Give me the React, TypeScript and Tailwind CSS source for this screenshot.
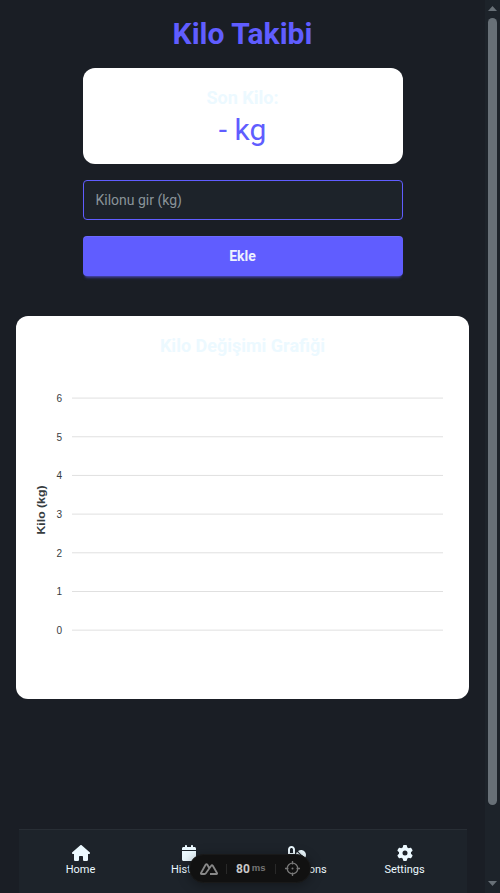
import { FaCalendar, FaGear, FaHouse, FaPills } from "react-icons/fa6";

const ticks = [6, 5, 4, 3, 2, 1, 0];

function Chart() {
  return (
    <svg width="421" height="323" viewBox="32 360 421 323" className="block">
      {ticks.map((t, i) => {
        const y = 398.07 + i * 38.68;
        return (
          <g key={t}>
            <line x1="72" x2="443" y1={y} y2={y} stroke="#e0e0e0" strokeWidth="1" />
            <text x="62" y={y + 4} textAnchor="end" textLength="5.6" lengthAdjust="spacingAndGlyphs" fill="#373d3f" className="font-['Liberation_Sans',sans-serif] text-[11px]">
              {t}
            </text>
          </g>
        );
      })}
      <text
        x="41"
        y="510"
        textAnchor="middle"
        dominantBaseline="central"
        transform="rotate(-90 41 510)"
        textLength="49"
        lengthAdjust="spacingAndGlyphs"
        fill="#373d3f"
        className="font-['Liberation_Sans',sans-serif] text-[11px] font-black"
      >
        Kilo (kg)
      </text>
    </svg>
  );
}

const items = [
  { label: "Home", Icon: FaHouse, size: "w-[18px]" },
  { label: "History", Icon: FaCalendar, size: "w-4" },
  { label: "Medications", Icon: FaPills, size: "w-[18px]" },
  { label: "Settings", Icon: FaGear, size: "w-4" },
];

function Dock() {
  return (
    <nav className="mx-auto mt-auto flex h-16 w-[448px] border-t border-[#282e35] bg-[#1d232a] px-2 text-[#ecf9ff]">
      {items.map(({ label, Icon, size }) => (
        <div key={label} className="flex w-[108px] flex-col items-center pt-[15px] text-[11px]">
          <Icon className={`h-4 ${size}`} />
          <span className="mt-px leading-4">{label}</span>
        </div>
      ))}
    </nav>
  );
}

function DevTools() {
  return (
    <div className="absolute top-[854px] left-[189px] flex h-[29px] w-[122px] items-center rounded-full border border-[#191919] bg-[#111] text-[#c8c8c8] shadow-[0_2px_12px_rgba(0,0,0,0.35)]">
      <svg width="18" height="12" viewBox="0 0 18 12" className="ml-[10px]" fill="none" stroke="#888" strokeWidth="1.8" strokeLinejoin="round">
        <path d="M9 4.7L7.4 1.8Q6.5.5 5.6 1.8L1 10Q.6 11 1.6 11H4.5Q5.5 11 6 10.1L11.2 2.8Q12 1.6 12.8 2.8L17 10Q17.4 11 16.4 11H10" />
      </svg>
      <i className="ml-[8px] h-[10px] w-px bg-[#292929]" />
      <span className="ml-[9px] text-[12px] leading-4 font-bold">80</span>
      <span className="ml-[2px] font-['Liberation_Sans',sans-serif] text-[9.5px] font-bold text-[#757575]">ms</span>
      <i className="ml-[9px] h-[10px] w-px bg-[#292929]" />
      <svg width="15" height="15" viewBox="0 0 15 15" className="ml-[9px]" fill="none" stroke="#777" strokeWidth="1.3">
        <circle cx="7.5" cy="7.5" r="5.3" />
        <circle cx="7.5" cy="7.5" r="1" fill="#777" stroke="none" />
        <path d="M7.5 0v3.5M7.5 11.5V15M0 7.5h3.5M11.5 7.5H15" />
      </svg>
    </div>
  );
}

export default function App() {
  return (
    <div className="relative flex h-[893px] w-[500px] overflow-hidden bg-[#1a1e25] font-['Roboto',sans-serif]">
      <div className="flex w-[485px] flex-col">
        <main className="flex flex-col px-4 pt-4">
          <h1 className="text-center text-[30px] leading-9 font-bold text-[#605dff]">Kilo Takibi</h1>
          <section className="mx-auto mt-4 h-24 w-80 rounded-xl bg-white pt-4 text-center">
            <h2 className="text-lg leading-7 font-bold text-[#ecf9ff]">Son Kilo:</h2>
            <p className="text-[30px] leading-9 text-[#605dff]">- kg</p>
          </section>
          <input
            placeholder="Kilonu gir (kg)"
            className="mx-auto mt-4 h-10 w-80 rounded border border-[#605dff] bg-[#1d232a] px-3 text-sm text-[#ecf9ff] outline-none placeholder:text-[#8a9399]"
          />
          <button className="mx-auto mt-4 h-10 w-80 rounded bg-[#605dff] text-sm font-bold text-[#edf1fe] shadow-[inset_0_1px_0_rgba(255,255,255,0.08),0_3px_2px_-2px_rgba(96,93,255,0.45),0_4px_3px_-2px_rgba(96,93,255,0.35)]">
            Ekle
          </button>
          <section className="mt-10 h-[383px] rounded-xl bg-white p-4">
            <h2 className="text-center text-lg leading-7 font-bold text-[#ecf9ff]">Kilo Değişimi Grafiği</h2>
            <Chart />
          </section>
        </main>
        <Dock />
      </div>
      <aside className="flex w-[15px] flex-col items-center bg-[#1d232a]">
        <svg width="9" height="5" viewBox="0 0 9 5" className="mt-[6px]">
          <path d="M4.5 0L9 5H0z" fill="#687077" />
        </svg>
        <div className="mt-[7px] h-[787px] w-[9px] rounded-full bg-[#687077]" />
        <svg width="9" height="5" viewBox="0 0 9 5" className="mt-auto mb-[7px]">
          <path d="M4.5 5L9 0H0z" fill="#687077" />
        </svg>
      </aside>
      <DevTools />
    </div>
  );
}
